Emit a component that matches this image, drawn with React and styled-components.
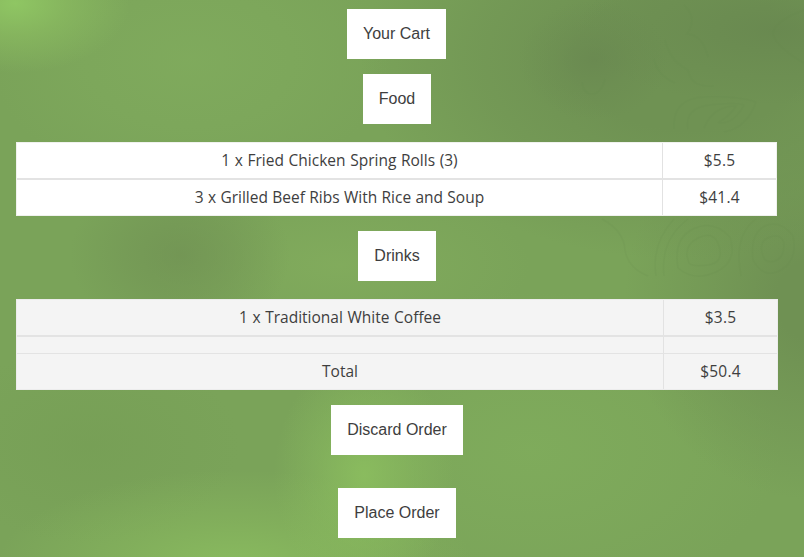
import React from 'react';
import styled, { createGlobalStyle } from 'styled-components';

const GlobalStyle = createGlobalStyle`
  * { box-sizing: border-box; }
  html, body { margin: 0; height: 557px; overflow: hidden; }
`;

const Page = styled.main`
  position: relative;
  width: 804px;
  height: 557px;
  overflow: hidden;
  color: #3e3e3e;
  background:
    radial-gradient(ellipse 115px 70px at 15px 3px, #8fc663 0%, #8bbd60aa 45%, #8fc66300 100%),
    radial-gradient(ellipse 90px 120px at 364px 475px, #8cbf5fdd 0%, #8cbf5f66 50%, #8cbf5f00 100%),
    radial-gradient(ellipse 240px 100px at 235px 570px, #8cbf60dd 0%, #8abb5e77 50%, #8abb5e00 100%),
    radial-gradient(ellipse 75px 60px at 594px 60px, #66834f88 0%, #68865044 50%, #68865000 100%),
    radial-gradient(ellipse 200px 75px at 775px 30px, #67864fbb 0%, #67864f55 50%, #67864f00 100%),
    radial-gradient(ellipse 330px 200px at 690px 60px, #6f9253 35%, #6f925399 65%, #6f925300 100%),
    radial-gradient(ellipse 110px 85px at 180px 255px, #709153bb 0%, #70915366 50%, #70915300 100%),
    radial-gradient(ellipse 190px 80px at 340px 265px, #83ad5dcc 0%, #83ad5d66 50%, #83ad5d00 100%),
    radial-gradient(ellipse 190px 200px at 814px 300px, #6f9153 20%, #6f915388 55%, #6f915300 100%),
    radial-gradient(ellipse 200px 130px at 190px 60px, #80ab5ddd 0%, #80ab5d77 55%, #80ab5d00 100%),
    radial-gradient(ellipse 150px 100px at 90px 445px, #759d5499 0%, #759d5400 100%),
    radial-gradient(ellipse 250px 160px at 530px 450px, #80ad5ccc 0%, #80ad5c66 55%, #80ad5c00 100%),
    #7aa359;
`;

const Terrain = styled.svg`
  position: absolute;
  inset: 0;
  fill: none;
  stroke: #64894c;
  stroke-width: 1.5;
  opacity: 0.13;
`;

const Cart = styled.div`
  position: relative;
  width: 762px;
  margin-left: 16px;
  padding-top: 9px;
  display: flex;
  flex-direction: column;
  align-items: center;
`;

const Tile = styled.div`
  width: ${({ $width }) => $width}px;
  height: 50px;
  margin: 0 ${({ $inset }) => $inset || 0}px ${({ $gap }) => $gap || 0}px 0;
  padding: 0 0 1px;
  display: flex;
  align-items: center;
  justify-content: center;
  border: 0;
  background: #fff;
  color: inherit;
  font: 16px "Liberation Sans", Arial, sans-serif;
  white-space: nowrap;
`;

const Heading = styled(Tile).attrs({ as: 'h2' })``;

const Action = styled(Tile).attrs({ as: 'button' })``;

const Table = styled.section`
  align-self: flex-start;
  width: ${({ $width }) => $width}px;
  margin-bottom: 15px;
  border: 1px solid ${({ $shaded }) => ($shaded ? '#ececec' : '#f0f2ee')};
  background: ${({ $shaded }) => ($shaded ? '#f4f4f4' : '#fff')};
`;

const Row = styled.div`
  display: grid;
  grid-template-columns: 1fr 114px;
  height: ${({ $height }) => $height}px;
  border-bottom: ${({ $line }) => $line || 0}px solid #e3e3e3;
`;

const Cell = styled.div`
  display: flex;
  align-items: center;
  justify-content: center;
  padding-bottom: 1px;
  white-space: nowrap;
  & + & { border-left: 1px solid #e2e2e2; }
`;

const Label = styled.span`
  font: 15.5px/20px "Open Sans", "Trebuchet MS", sans-serif;
  word-spacing: ${({ $spacing }) => $spacing || 0}px;
`;

const Price = styled(Label)`
  letter-spacing: 0.2px;
`;

function Item({ name, price, spacing, height, line }) {
  return (
    <Row $height={height} $line={line}>
      <Cell>{name && <Label $spacing={spacing}>{name}</Label>}</Cell>
      <Cell>{price && <Price>{price}</Price>}</Cell>
    </Row>
  );
}

export default function App() {
  return (
    <>
      <GlobalStyle />
      <Page>
        <Terrain width="804" height="557" aria-hidden="true">
          <path d="M582 82Q583 94 592 94T605 79M804 10Q772 22 773 35Q779 49 804 63" />
          <path d="M674 129Q672 98 705 97T756 102Q747 128 724 132M688 129Q684 108 710 105T744 105Q734 124 719 123M704 128Q713 106 736 106Q731 115 718 123" />
          <path d="M684 5Q698 18 687 34Q703 35 708 57M665 40Q670 61 688 70Q691 88 714 86M654 59Q657 75 675 83" />
          <path d="M602 219Q624 231 625 250Q628 268 648 276M656 276Q651 244 674 219M664 276Q660 240 688 219M678 268Q673 239 693 229T730 237Q738 262 716 272T678 268M689 263Q682 246 698 238T719 246Q724 263 708 265T689 263M741 276Q733 236 756 219M753 260Q750 233 765 226T793 236Q798 260 781 270T753 260M763 256Q758 241 770 237T784 244Q784 258 775 261T763 256" />
        </Terrain>
        <Cart>
          <Heading $width={99} $gap={15} $inset={1}>Your Cart</Heading>
          <Heading $width={68} $gap={18}>Food</Heading>
          <Table $width={761}>
            <Item height={37} line={2} spacing={0.6} name="1 x Fried Chicken Spring Rolls (3)" price="$5.5" />
            <Item height={35} spacing={0.3} name="3 x Grilled Beef Ribs With Rice and Soup" price="$41.4" />
          </Table>
          <Heading $width={78} $gap={18}>Drinks</Heading>
          <Table $width={762} $shaded>
            <Item height={37} line={2} spacing={0.6} name="1 x Traditional White Coffee" price="$3.5" />
            <Item height={17} line={1} />
            <Item height={35} name="Total" price="$50.4" />
          </Table>
          <Action $width={132} $gap={33}>Discard Order</Action>
          <Action $width={118}>Place Order</Action>
        </Cart>
      </Page>
    </>
  );
}
